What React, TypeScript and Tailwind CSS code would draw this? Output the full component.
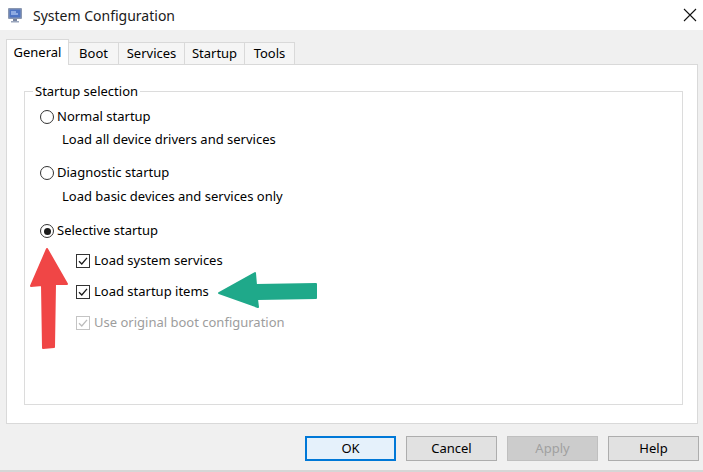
import React from "react";

const font = { fontFamily: '"Noto Sans", "Open Sans", Arial, sans-serif' };

function Radio({ checked }: { checked?: boolean }) {
  return (
    <span className="flex h-[14px] w-[14px] shrink-0 items-center justify-center rounded-full border border-[#333] bg-white">
      {checked && <span className="h-[7px] w-[7px] rounded-full bg-[#1a1a1a]" />}
    </span>
  );
}

function Check({ disabled }: { disabled?: boolean }) {
  const c = disabled ? "#bcbcbc" : "#1a1a1a";
  return (
    <span
      className={
        "flex h-[14px] w-[14px] shrink-0 items-center justify-center border bg-white " +
        (disabled ? "border-[#c4c4c4]" : "border-[#333]")
      }
    >
      <svg width="10" height="10" viewBox="0 0 10 10">
        <path d="M1 5.2 L3.8 8 L9 1.8" fill="none" stroke={c} strokeWidth="1.3" />
      </svg>
    </span>
  );
}

function Tab({ label, active, w }: { label: string; active?: boolean; w: string }) {
  if (active) {
    return (
      <div className={"relative z-10 -mb-px flex h-[26px] items-start justify-center border border-b-0 border-[#d9d9d9] bg-white pt-[3px] " + w}>
        {label}
      </div>
    );
  }
  return (
    <div className={"flex h-[22px] items-center justify-center border border-b-0 border-l-0 border-[#d9d9d9] bg-[#f5f5f5] " + w}>
      {label}
    </div>
  );
}

function Button({ label, primary, disabled }: { label: string; primary?: boolean; disabled?: boolean }) {
  let cls = "flex h-[25px] w-[91px] items-center justify-center border ";
  if (primary) cls += "border-2 border-[#0078d7] bg-[#e5f1fb] text-black";
  else if (disabled) cls += "border-[#bfbfbf] bg-[#cccccc] text-[#a0a0a0]";
  else cls += "border-[#adadad] bg-[#e1e1e1] text-black";
  return <div className={cls}>{label}</div>;
}

export default function App() {
  return (
    <div
      className="relative h-[472px] w-[703px] overflow-hidden bg-[#f0f0f0] text-[13px] text-black"
      style={font}
    >
      {/* title bar */}
      <div className="flex h-[30px] items-center bg-white">
        <svg className="ml-[7px]" width="16" height="16" viewBox="0 0 16 16">
          <rect x="1" y="1" width="14" height="11" rx="1" fill="#8a97b0" />
          <rect x="2.5" y="2.5" width="11" height="8" fill="#4d74c4" />
          <path d="M4 5 h5 M4 7 h7" stroke="#cfe0ff" strokeWidth="1" />
          <rect x="6" y="12" width="4" height="2" fill="#7a86a0" />
          <rect x="4" y="14" width="8" height="1.5" fill="#9aa6bd" />
        </svg>
        <span className="ml-[10px] text-[14px] text-[#1a1a1a]">System Configuration</span>
        <svg className="ml-auto mr-[6px]" width="14" height="14" viewBox="0 0 14 14">
          <path d="M1 1 L13 13 M13 1 L1 13" stroke="#111" strokeWidth="1.1" />
        </svg>
      </div>

      {/* tabs */}
      <div className="flex items-end pl-[6px] pt-[9px]">
        <Tab label="General" active w="w-[63px]" />
        <Tab label="Boot" w="w-[50px]" />
        <Tab label="Services" w="w-[66px]" />
        <Tab label="Startup" w="w-[60px]" />
        <Tab label="Tools" w="w-[50px]" />
      </div>

      {/* tab panel */}
      <div className="mx-[6px] h-[360px] w-[692px] border border-[#d9d9d9] bg-white pb-[18px] pl-[17px] pr-[14px] pt-[26px]">
        <div className="relative h-full border border-[#dcdcdc] pl-[15px] pt-[15px]">
          <span className="absolute left-[8px] top-[-10px] bg-white px-[2px] leading-[18px]">
            Startup selection
          </span>

          <div className="flex h-[20px] items-center gap-[3px]">
            <Radio />
            <span>Normal startup</span>
          </div>
          <div className="mt-[3px] flex h-[20px] items-center pl-[22px]">
            Load all device drivers and services
          </div>

          <div className="mt-[13px] flex h-[20px] items-center gap-[3px]">
            <Radio />
            <span>Diagnostic startup</span>
          </div>
          <div className="mt-[4px] flex h-[20px] items-center pl-[22px]">
            Load basic devices and services only
          </div>

          <div className="mt-[14px] flex h-[20px] items-center gap-[3px]">
            <Radio checked />
            <span>Selective startup</span>
          </div>

          <div className="mt-[10px] flex h-[20px] items-center gap-[4px] pl-[36px]">
            <Check />
            <span>Load system services</span>
          </div>
          <div className="mt-[11px] flex h-[20px] items-center gap-[4px] pl-[36px]">
            <Check />
            <span>Load startup items</span>
          </div>
          <div className="mt-[11px] flex h-[20px] items-center gap-[4px] pl-[36px] text-[#9d9d9d]">
            <Check disabled />
            <span>Use original boot configuration</span>
          </div>
        </div>
      </div>

      {/* buttons */}
      <div className="mt-[12px] flex justify-end gap-[10px] pr-[4px]">
        <Button label="OK" primary />
        <Button label="Cancel" />
        <Button label="Apply" disabled />
        <Button label="Help" />
      </div>

      <div className="absolute bottom-0 left-0 h-[2px] w-full bg-[#d6d6d6]" />

      {/* annotation arrows */}
      <svg className="pointer-events-none absolute left-0 top-0" width="703" height="472">
        <polygon
          points="47,249 67,284 55,284 54,347 43,348 42,285 31,286"
          fill="#f04646"
          stroke="#f04646"
          strokeWidth="2"
          strokeLinejoin="round"
        />
        <polygon
          points="219,293 255,273 256,285 316,284 316,298 257,299 258,307"
          fill="#1fa98a"
          stroke="#1fa98a"
          strokeWidth="2"
          strokeLinejoin="round"
        />
      </svg>
    </div>
  );
}
